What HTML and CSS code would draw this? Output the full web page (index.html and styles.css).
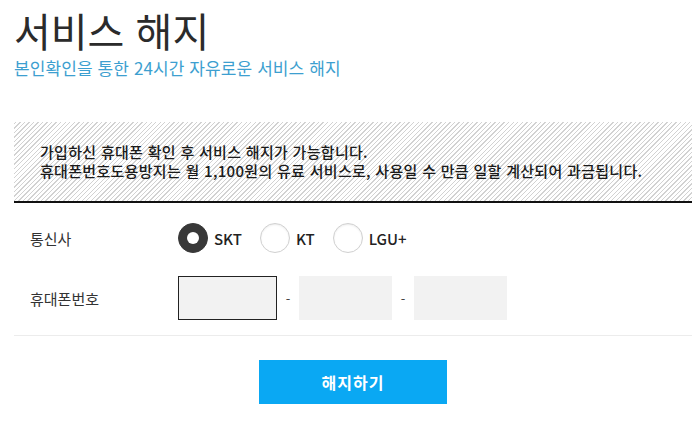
FILE: index.html
```html
<!DOCTYPE html>
<html lang="ko">
<head>
<meta charset="utf-8">
<link rel="stylesheet" href="styles.css">
</head>
<body>
<div class="page">
  <header class="head">
    <h1 class="title">서비스 해지</h1>
    <p class="sub">본인확인을 통한 24시간 자유로운 서비스 해지</p>
  </header>
  <div class="notice">
    <p>가입하신 휴대폰 확인 후 서비스 해지가 가능합니다.</p>
    <p>휴대폰번호도용방지는 월 1,100원의 유료 서비스로, 사용일 수 만큼 일할 계산되어 과금됩니다.</p>
  </div>
  <div class="form">
    <div class="row">
      <div class="label">통신사</div>
      <div class="field radios">
        <label class="radio"><span class="dot on"></span><span class="rtext">SKT</span></label>
        <label class="radio"><span class="dot"></span><span class="rtext">KT</span></label>
        <label class="radio"><span class="dot"></span><span class="rtext">LGU+</span></label>
      </div>
    </div>
    <div class="row">
      <div class="label">휴대폰번호</div>
      <div class="field phones">
        <span class="box first"></span>
        <span class="dash">-</span>
        <span class="box"></span>
        <span class="dash">-</span>
        <span class="box"></span>
      </div>
    </div>
  </div>
  <div class="actions">
    <button class="btn">해지하기</button>
  </div>
</div>
</body>
</html>
```
FILE: styles.css
```css
* { box-sizing: border-box; margin: 0; padding: 0; }
body {
  background: #fff;
  font-family: "Noto Sans CJK KR", "Noto Sans", sans-serif;
  color: #222;
}
.page { padding: 0 8px 0 14px; }
.head { padding-top: 4px; }
.title {
  font-size: 40px;
  font-weight: 400;
  line-height: 52px;
  color: #2b2b2b;
}
.sub {
  font-size: 17px;
  line-height: 24px;
  color: #3d9fd0;
  letter-spacing: 0.1px;
}
.notice {
  margin-top: 42px;
  height: 81px;
  padding: 20px 0 0 26px;
  border-bottom: 2px solid #111;
  background: repeating-linear-gradient(-45deg, #fff 0, #fff 2.2px, #d2d2d2 2.2px, #d2d2d2 3.2px);
}
.notice p {
  font-size: 15px;
  line-height: 19px;
  font-weight: 500;
  color: #1a1a1a;
  letter-spacing: 0.3px;
}
.form {
  border-bottom: 1px solid #ececec;
  padding: 20px 0 15px;
}
.row { display: flex; align-items: center; }
.row + .row { margin-top: 23px; }
.label {
  width: 164px;
  padding-left: 16px;
  font-size: 15px;
  color: #333;
}
.field { display: flex; align-items: center; }
.radio { display: flex; align-items: center; margin-right: 18px; }
.dot {
  width: 30px; height: 30px;
  border-radius: 50%;
  border: 1px solid #d0d0d0;
  background: #fff;
  box-shadow: inset 0 1px 2px rgba(0,0,0,0.08);
  display: flex; align-items: center; justify-content: center;
}
.dot.on { background: #383838; border-color: #383838; box-shadow: none; }
.dot.on::after {
  content: "";
  width: 12px; height: 12px;
  border-radius: 50%;
  background: #fff;
}
.rtext {
  margin-left: 6px;
  font-size: 15px;
  font-weight: 500;
  color: #222;
}
.box {
  width: 93px; height: 44px;
  background: #f2f2f2;
  display: block;
}
.box.first { width: 99px; border: 1.5px solid #222; }
.dash { width: 22px; text-align: center; font-size: 13px; color: #444; }
.actions { display: flex; justify-content: center; padding-top: 24px; }
.btn {
  width: 188px; height: 44px;
  border: 0;
  background: #0aa8f3;
  color: #fff;
  font-family: "Noto Sans CJK KR", sans-serif;
  font-size: 16px;
  font-weight: 700;
  letter-spacing: 1px;
}
```
